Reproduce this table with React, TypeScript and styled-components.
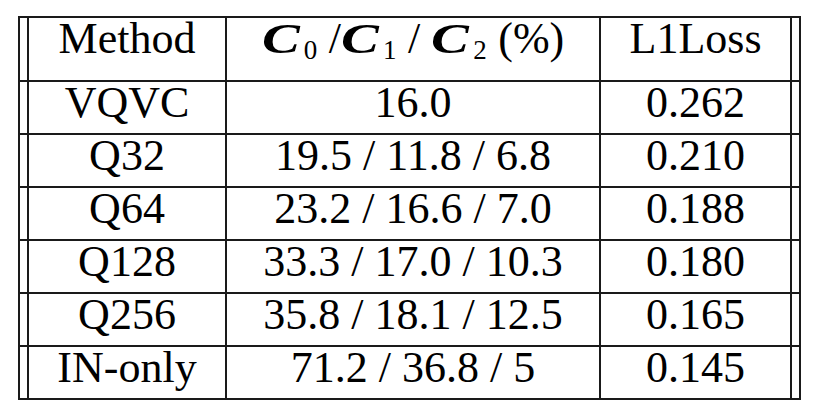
import styled, { createGlobalStyle } from "styled-components";

const GlobalStyle = createGlobalStyle`
body {
  margin: 0;
  background: #ffffff;
  color: #000000;
  font-family: "Liberation Serif", "Times New Roman", serif;
}
* { box-sizing: border-box; }
`;

const Frame = styled.div`
margin: 16px 0 0 18px;
width: 783px;
border-left: 2px solid #1a1a1a;
border-right: 2px solid #1a1a1a;
border-bottom: 2px solid #1a1a1a;
`;

const Row = styled.div<{ $h: number }>`
display: grid;
grid-template-columns: 200px 372px 193px;
padding: 0 7px;
height: ${(p) => p.$h + 2}px;
border-top: 2px solid #1a1a1a;
`;

const Cell = styled.div<{ $lines?: boolean }>`
display: flex;
justify-content: center;
align-items: flex-start;
padding-top: 1px;
font-family: "Liberation Serif", "Times New Roman", serif;
font-size: 44px;
line-height: 40px;
white-space: pre;
border-left: ${(p) => (p.$lines ? "2px solid #1a1a1a" : "none")};
border-right: ${(p) => (p.$lines ? "2px solid #1a1a1a" : "none")};
`;

const MathC = styled.span`
display: inline-block;
width: 42px;
font-family: "Liberation Serif", serif;
font-weight: bold;
font-style: italic;
font-size: 42px;
transform: scaleX(1.35);
transform-origin: left center;
`;

const Sub = styled.span`
display: inline-block;
width: 14px;
font-size: 27px;
position: relative;
top: 6px;
`;

const rows = [
  ["VQVC", "16.0", "0.262"],
  ["Q32", "19.5 / 11.8 / 6.8", "0.210"],
  ["Q64", "23.2 / 16.6 / 7.0", "0.188"],
  ["Q128", "33.3 / 17.0 / 10.3", "0.180"],
  ["Q256", "35.8 / 18.1 / 12.5", "0.165"],
  ["IN-only", "71.2 / 36.8 / 5", "0.145"],
];

export default function App() {
  return (
    <>
      <GlobalStyle />
      <Frame>
        <Row $h={62}>
          <Cell $lines>Method</Cell>
          <Cell>
            <span>
              <MathC>C</MathC><Sub>0</Sub> /<MathC>C</MathC><Sub>1</Sub> / <MathC>C</MathC><Sub>2</Sub> (%)
            </span>
          </Cell>
          <Cell $lines>L1Loss</Cell>
        </Row>
        {rows.map((r) => (
          <Row $h={51} key={r[0]}>
            <Cell $lines>{r[0]}</Cell>
            <Cell>{r[1]}</Cell>
            <Cell $lines>{r[2]}</Cell>
          </Row>
        ))}
      </Frame>
    </>
  );
}
